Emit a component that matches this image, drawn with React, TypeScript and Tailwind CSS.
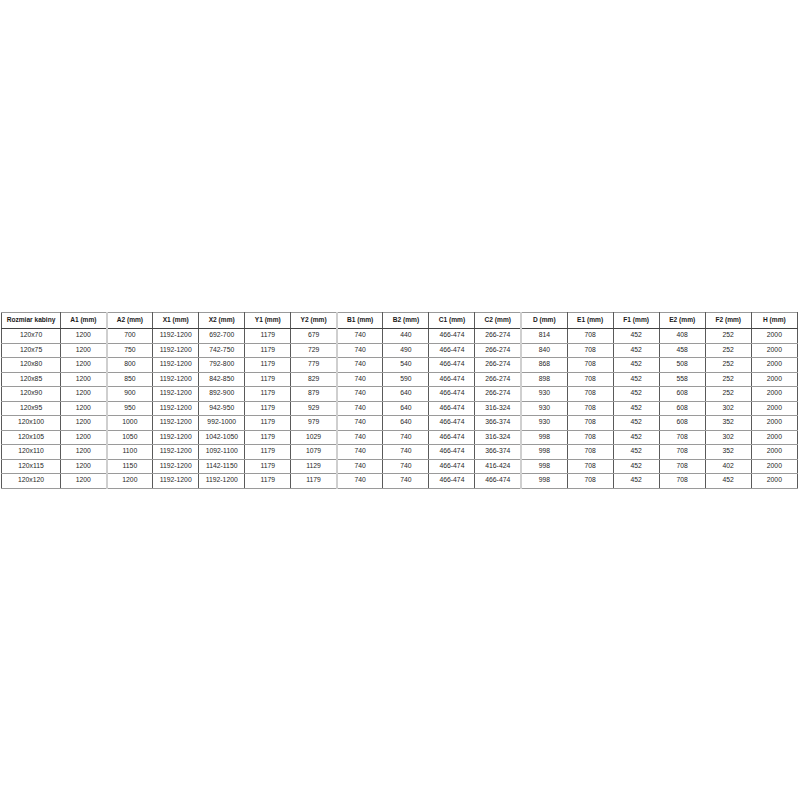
const HEADERS = [
  "Rozmiar kabiny",
  "A1 (mm)",
  "A2 (mm)",
  "X1 (mm)",
  "X2 (mm)",
  "Y1 (mm)",
  "Y2 (mm)",
  "B1 (mm)",
  "B2 (mm)",
  "C1 (mm)",
  "C2 (mm)",
  "D (mm)",
  "E1 (mm)",
  "F1 (mm)",
  "E2 (mm)",
  "F2 (mm)",
  "H (mm)",
];

const ROWS: string[][] = [
  ["120x70", "1200", "700", "1192-1200", "692-700", "1179", "679", "740", "440", "466-474", "266-274", "814", "708", "452", "408", "252", "2000"],
  ["120x75", "1200", "750", "1192-1200", "742-750", "1179", "729", "740", "490", "466-474", "266-274", "840", "708", "452", "458", "252", "2000"],
  ["120x80", "1200", "800", "1192-1200", "792-800", "1179", "779", "740", "540", "466-474", "266-274", "868", "708", "452", "508", "252", "2000"],
  ["120x85", "1200", "850", "1192-1200", "842-850", "1179", "829", "740", "590", "466-474", "266-274", "898", "708", "452", "558", "252", "2000"],
  ["120x90", "1200", "900", "1192-1200", "892-900", "1179", "879", "740", "640", "466-474", "266-274", "930", "708", "452", "608", "252", "2000"],
  ["120x95", "1200", "950", "1192-1200", "942-950", "1179", "929", "740", "640", "466-474", "316-324", "930", "708", "452", "608", "302", "2000"],
  ["120x100", "1200", "1000", "1192-1200", "992-1000", "1179", "979", "740", "640", "466-474", "366-374", "930", "708", "452", "608", "352", "2000"],
  ["120x105", "1200", "1050", "1192-1200", "1042-1050", "1179", "1029", "740", "740", "466-474", "316-324", "998", "708", "452", "708", "302", "2000"],
  ["120x110", "1200", "1100", "1192-1200", "1092-1100", "1179", "1079", "740", "740", "466-474", "366-374", "998", "708", "452", "708", "352", "2000"],
  ["120x115", "1200", "1150", "1192-1200", "1142-1150", "1179", "1129", "740", "740", "466-474", "416-424", "998", "708", "452", "708", "402", "2000"],
  ["120x120", "1200", "1200", "1192-1200", "1192-1200", "1179", "1179", "740", "740", "466-474", "466-474", "998", "708", "452", "708", "452", "2000"],
];

// columns whose left rule is drawn as a lighter, wider line in the source sheet
const SOFT_LEFT = new Set([2, 7, 11]);

function cellClass(index: number) {
  return SOFT_LEFT.has(index)
    ? "border-y border-r border-y-[#9a9a9a] border-r-[#5a5a5a] border-l-2 border-l-[#cfcfcf]"
    : "border border-[#5a5a5a] border-y-[#9a9a9a]";
}

export default function App() {
  return (
    <div className="min-h-[800px] w-[800px] bg-white pt-[312px] pl-px">
      <table
        className="w-[797px] table-fixed border-collapse border border-[#444] text-center text-[6.8px] leading-none text-[#262626]"
        style={{ fontFamily: '"Liberation Sans", Arial, sans-serif' }}
      >
        <colgroup>
          <col className="w-[59px]" />
          {HEADERS.slice(1).map((h) => (
            <col key={h} className="w-[46px]" />
          ))}
        </colgroup>
        <thead>
          <tr className="h-[16px]">
            {HEADERS.map((h, i) => (
              <th key={h} className={`${cellClass(i)} border-b-[#444] p-0 text-[6.6px] font-bold text-[#1a1a1a]`}>
                {h}
              </th>
            ))}
          </tr>
        </thead>
        <tbody>
          {ROWS.map((row) => (
            <tr key={row[0]} className="h-[14.5px]">
              {row.map((value, i) => (
                <td key={i} className={`${cellClass(i)} p-0`}>
                  {value}
                </td>
              ))}
            </tr>
          ))}
        </tbody>
      </table>
    </div>
  );
}
